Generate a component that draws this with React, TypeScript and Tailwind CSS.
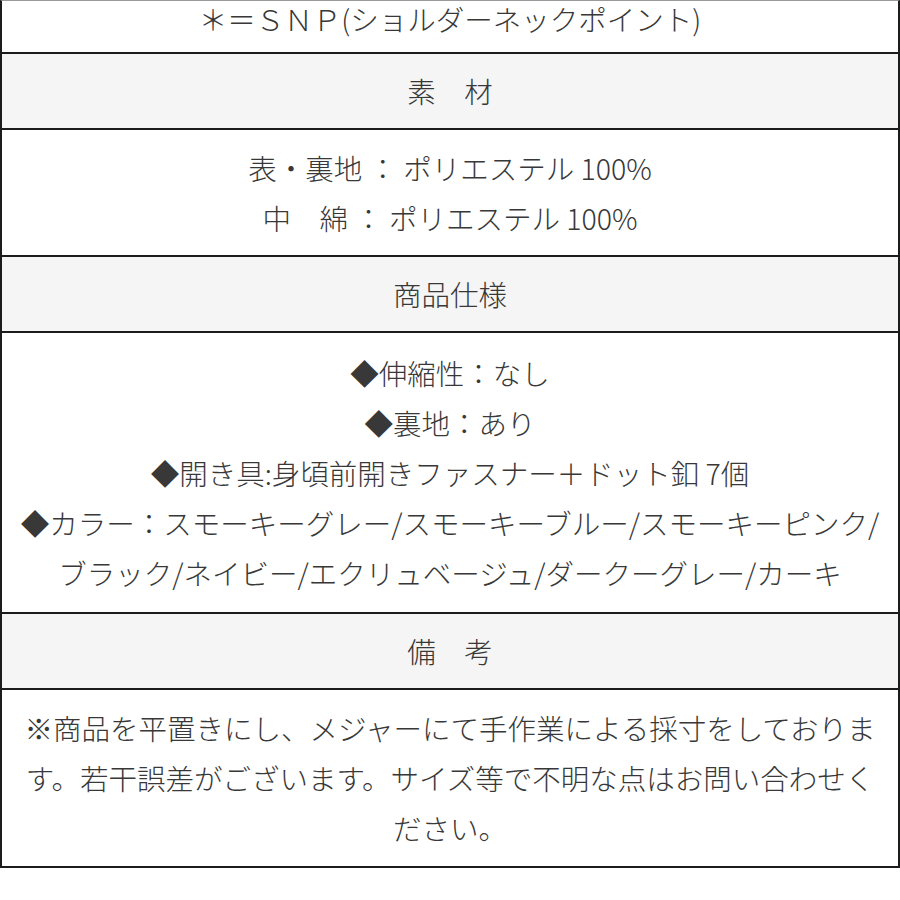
import React from "react";

const Header = ({ children }: { children: React.ReactNode }) => (
  <div className="h-[76px] border-t-2 border-[#1c1c1c] bg-[#f5f5f5] flex items-center justify-center leading-[50px]">
    {children}
  </div>
);

const Lines = ({ lines, pad }: { lines: string[]; pad: string }) => (
  <div className={`border-t-2 border-[#1c1c1c] flex flex-col items-center leading-[50px] ${pad}`}>
    {lines.map((l, i) => (
      <div key={i} className="whitespace-nowrap">
        {l}
      </div>
    ))}
  </div>
);

export default function App() {
  return (
    <div className="w-[900px] h-[900px] bg-white text-[#383838] font-light font-['Noto_Sans_CJK_JP','Noto_Sans',sans-serif] text-[28.5px]">
      <div className="border-x-2 border-x-[#1c1c1c] border-t border-t-[#9a9a9a] border-b-2 border-b-[#1c1c1c]">
        <div className="h-[51px] flex justify-center pt-[1px] leading-[34px]">
          <span className="whitespace-nowrap">＊＝ＳＮＰ(ショルダーネックポイント)</span>
        </div>
        <Header>素　材</Header>
        <div className="border-t-2 border-[#1c1c1c] flex flex-col items-center leading-[50px] py-[12.5px]">
          <div className="whitespace-nowrap">表・裏地 ： ポリエステル 100%</div>
          <div className="whitespace-nowrap">中　綿 ： ポリエステル 100%</div>
        </div>
        <Header>商品仕様</Header>
        <Lines
          pad="py-[14.5px]"
          lines={[
            "◆伸縮性：なし",
            "◆裏地：あり",
            "◆開き具:身頃前開きファスナー＋ドット釦 7個",
            "◆カラー：スモーキーグレー/スモーキーブルー/スモーキーピンク/",
            "ブラック/ネイビー/エクリュベージュ/ダークーグレー/カーキ",
          ]}
        />
        <Header>備　考</Header>
        <Lines
          pad="py-[13px]"
          lines={[
            "※商品を平置きにし、メジャーにて手作業による採寸をしておりま",
            "す。若干誤差がございます。サイズ等で不明な点はお問い合わせく",
            "ださい。",
          ]}
        />
      </div>
    </div>
  );
}
